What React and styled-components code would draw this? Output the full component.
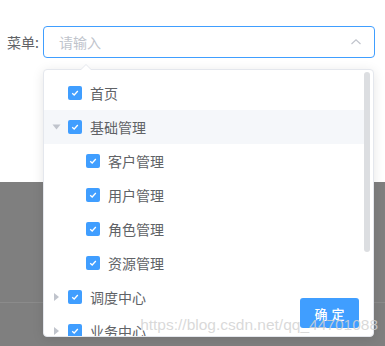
import styled, { createGlobalStyle } from "styled-components";

const GlobalStyle = createGlobalStyle`
  html, body {
    margin: 0;
    padding: 0;
    background: #7f7f7f;
  }
  body {
    font-family: "Liberation Sans", "Noto Sans CJK SC", sans-serif;
  }
`;

const Page = styled.div`
  position: relative;
  width: 385px;
  height: 346px;
  overflow: hidden;
  background: #7f7f7f;
`;

const Header = styled.div`
  height: 182px;
  background: #ffffff;
  box-sizing: border-box;
  padding-top: 26px;
`;

const FormRow = styled.div`
  display: flex;
  align-items: center;
  padding-left: 7px;
`;

const Label = styled.label`
  width: 36px;
  font-size: 14px;
  color: #606266;
  font-family: "Noto Sans CJK SC", sans-serif;
`;

const Input = styled.div`
  display: flex;
  align-items: center;
  justify-content: space-between;
  box-sizing: border-box;
  width: 332px;
  height: 32px;
  border: 1px solid #409eff;
  border-radius: 4px;
  padding: 0 12px 0 15px;
  .placeholder {
    font-size: 14px;
    color: #c0c4cc;
    font-family: "Noto Sans CJK SC", sans-serif;
  }
`;

const Divider = styled.div`
  margin-top: 120px;
  height: 1px;
  background: #8b8b8b;
`;

const Dropdown = styled.div`
  position: absolute;
  left: 43px;
  top: 69px;
  width: 331px;
  height: 268px;
  box-sizing: border-box;
  background: #ffffff;
  border: 1px solid #e4e7ed;
  border-radius: 4px;
  box-shadow: 0 2px 12px rgba(0, 0, 0, 0.1);
  &::before,
  &::after {
    content: "";
    position: absolute;
    left: 36px;
    border: 6px solid transparent;
    border-top-width: 0;
  }
  &::before {
    top: -6px;
    border-bottom-color: #e4e7ed;
  }
  &::after {
    top: -5px;
    border-bottom-color: #ffffff;
  }
`;

const Scroller = styled.div`
  display: flex;
  height: 100%;
  overflow: hidden;
  border-radius: 4px;
`;

const Tree = styled.div`
  flex: 1;
  padding-top: 6px;
`;

const ScrollTrack = styled.div`
  width: 9px;
  padding: 2px 0 0 0;
  .thumb {
    width: 6px;
    height: 180px;
    border-radius: 3px;
    background: #dcdee1;
  }
`;

const Node = styled.div`
  display: flex;
  align-items: center;
  height: 34px;
  padding-left: ${(p) => (p.$level - 1) * 18}px;
  background: ${(p) => (p.$active ? "#f5f7fa" : "transparent")};
  font-family: "Noto Sans CJK SC", sans-serif;
  font-size: 14px;
  color: #606266;
`;

const Caret = styled.span`
  width: 24px;
  height: 24px;
  display: flex;
  align-items: center;
  justify-content: center;
  &::after {
    content: "";
    display: ${(p) => (p.$leaf ? "none" : "block")};
    border-style: solid;
    border-color: transparent transparent transparent #c0c4cc;
    border-width: 4px 0 4px 5px;
    transform: rotate(${(p) => (p.$open ? 90 : 0)}deg);
  }
`;

const Check = styled.span`
  width: 14px;
  height: 14px;
  border-radius: 2px;
  background: #409eff;
  display: flex;
  align-items: center;
  justify-content: center;
  margin-right: 8px;
`;

const ConfirmButton = styled.button`
  position: absolute;
  left: 256px;
  top: 228px;
  width: 59px;
  height: 30px;
  border: none;
  border-radius: 3px;
  background: #409eff;
  color: #ffffff;
  font-family: "Noto Sans CJK SC", sans-serif;
  font-size: 13px;
  font-weight: 500;
  letter-spacing: 4px;
  padding: 0 0 0 4px;
`;

const Watermark = styled.div`
  position: absolute;
  right: 7px;
  top: 316px;
  font-family: "Liberation Sans", sans-serif;
  font-size: 15.5px;
  color: rgba(210, 210, 210, 0.85);
  pointer-events: none;
`;

const nodes = [
  { label: "首页", level: 1, leaf: true },
  { label: "基础管理", level: 1, open: true, active: true },
  { label: "客户管理", level: 2, leaf: true },
  { label: "用户管理", level: 2, leaf: true },
  { label: "角色管理", level: 2, leaf: true },
  { label: "资源管理", level: 2, leaf: true },
  { label: "调度中心", level: 1 },
  { label: "业务中心", level: 1 },
];

const CheckMark = () => (
  <svg width="10" height="10" viewBox="0 0 10 10">
    <path d="M2.2 5.2 L4.2 7 L7.8 3" fill="none" stroke="#fff" strokeWidth="1.3" />
  </svg>
);

const ChevronUp = () => (
  <svg width="12" height="12" viewBox="0 0 12 12">
    <path d="M1.5 8 L6 3.8 L10.5 8" fill="none" stroke="#c0c4cc" strokeWidth="1.2" />
  </svg>
);

export default function App() {
  return (
    <>
      <GlobalStyle />
      <Page>
        <Header>
          <FormRow>
            <Label>菜单:</Label>
            <Input>
              <span className="placeholder">请输入</span>
              <ChevronUp />
            </Input>
          </FormRow>
        </Header>
        <Divider />
        <Dropdown>
          <Scroller>
            <Tree>
              {nodes.map((n) => (
                <Node key={n.label} $level={n.level} $active={n.active}>
                  <Caret $leaf={n.leaf} $open={n.open} />
                  <Check>
                    <CheckMark />
                  </Check>
                  {n.label}
                </Node>
              ))}
            </Tree>
            <ScrollTrack>
              <div className="thumb" />
            </ScrollTrack>
          </Scroller>
          <ConfirmButton>确定</ConfirmButton>
        </Dropdown>
        <Watermark>https://blog.csdn.net/qq_44701088</Watermark>
      </Page>
    </>
  );
}
